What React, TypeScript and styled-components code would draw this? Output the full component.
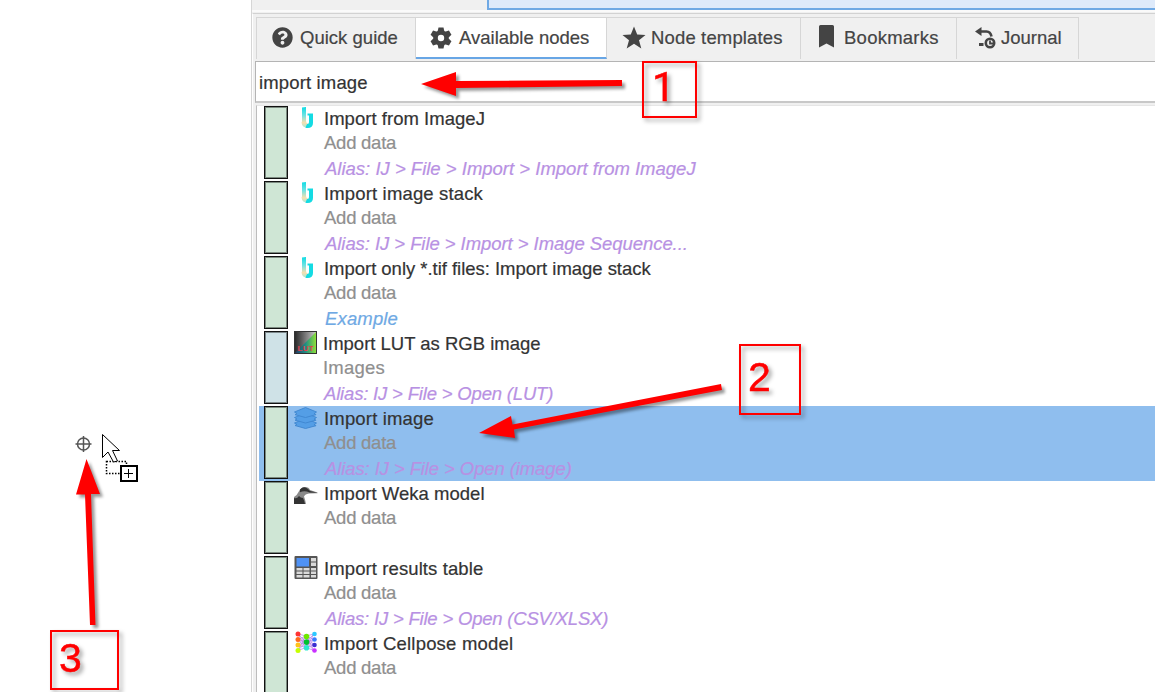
import React from "react";
import styled, { createGlobalStyle } from "styled-components";
import { FaQuestionCircle } from "react-icons/fa";

const GlobalStyle = createGlobalStyle`
  * { box-sizing: border-box; }
  body { margin: 0; background: #fff; overflow: hidden; font-family: "Liberation Sans", Arial, sans-serif; }
`;

const Window = styled.div`
  position: relative;
  display: flex;
  width: 1155px;
  height: 692px;
  overflow: hidden;
  background: #fff;
`;
const Canvas = styled.div`
  width: 251px;
  flex: none;
`;
const Side = styled.div`
  flex: 1;
  min-width: 0;
  display: flex;
  flex-direction: column;
  border-left: 1px solid #d6d6d6;
  background: #f0f0f0;
`;
const TopStrip = styled.div`
  height: 12px;
  flex: none;
  display: flex;
  padding-left: 235px;
  border-bottom: 2px solid #fafafa;
`;
const TopField = styled.div`
  flex: 1;
  height: 10px;
  background: #deeafa;
  border-left: 2px solid #6fa9e4;
  border-bottom: 2px solid #6fa9e4;
`;
const Dock = styled.div`
  flex: 1;
  display: flex;
  flex-direction: column;
  margin-top: 1px;
  border-top: 1px solid #d2d2d2;
  border-left: 1px solid #fff;
  padding: 3px 0 0 2px;
`;
const Tabs = styled.div`
  display: flex;
  height: 42px;
  flex: none;
  margin-left: 1px;
  border-top: 1px solid #d6d6d6;
  border-left: 1px solid #d6d6d6;
  width: 823px;
`;
const Tab = styled.div<{ $w: number; $active?: boolean; $pad: number; $gap: number }>`
  display: flex;
  align-items: center;
  gap: ${(p) => p.$gap}px;
  width: ${(p) => p.$w}px;
  padding: 0 0 ${(p) => (p.$active ? 0 : 2)}px ${(p) => p.$pad}px;
  height: 41px;
  border-right: 1px solid #d6d6d6;
  border-bottom: ${(p) => (p.$active ? "2px solid #68a6e5" : "0")};
  background: ${(p) => (p.$active ? "#fff" : "#f0f0f0")};
  color: #444;
  svg { flex: none; }
`;
const Label = styled.span<{ $ls?: number }>`
  font-size: 18.5px;
  line-height: 24px;
  white-space: nowrap;
  letter-spacing: ${(p) => p.$ls ?? 0}px;
  -webkit-text-stroke: 0.2px currentColor;
`;
const Search = styled.div`
  height: 42px;
  flex: none;
  display: flex;
  align-items: center;
  margin-top: 2px;
  padding: 2px 0 0 3px;
  border: 1px solid #b4b4b4;
  border-bottom: 2px solid #c8c8c8;
  border-right: 0;
  background: #fff;
  color: #333;
`;
const List = styled.div`
  flex: 1;
  margin: 2px 0 0 1px;
  border-left: 1px solid #bdbdbd;
  border-top: 1px solid #e6e6e6;
  background: #fff;
  padding-left: 2px;
`;
const Row = styled.div<{ $selected?: boolean }>`
  display: flex;
  height: 75px;
  padding-left: 5px;
  background: ${(p) => (p.$selected ? "#8fbeee" : "transparent")};
`;
const Bar = styled.div<{ $color: string }>`
  width: 24px;
  height: 73px;
  border: 1.5px solid #111;
  outline: 1px solid rgba(0, 0, 0, 0.4);
  outline-offset: -2px;
  background: ${(p) => p.$color};
`;
const IconCell = styled.div<{ $w: number }>`
  width: ${(p) => p.$w}px;
  padding-left: 6px;
  svg { display: block; }
`;
const Lines = styled.div`
  display: flex;
  flex-direction: column;
`;
const Line = styled.div<{ $kind: Kind; $ls?: number }>`
  height: 25px;
  line-height: ${(p) => ({ title: 25, sub: 24, alias: 25, example: 25 })[p.$kind]}px;
  font-size: 18.5px;
  white-space: nowrap;
  letter-spacing: ${(p) => p.$ls ?? 0}px;
  -webkit-text-stroke: 0.2px currentColor;
  padding-left: ${(p) => (p.$kind === "alias" || p.$kind === "example" ? 1 : 0)}px;
  font-style: ${(p) => (p.$kind === "alias" || p.$kind === "example" ? "italic" : "normal")};
  color: ${(p) => ({ title: "#333", sub: "#8f8f8f", alias: "#b891e3", example: "#6fa9e4" })[p.$kind]};
`;
const Overlay = styled.svg`
  position: absolute;
  left: 0;
  top: 0;
`;
const Callout = styled.div<{ $x: number; $y: number; $w: number; $h: number; $px: number; $py: number; $font?: string }>`
  position: absolute;
  left: ${(p) => p.$x}px;
  top: ${(p) => p.$y}px;
  width: ${(p) => p.$w}px;
  height: ${(p) => p.$h}px;
  padding: ${(p) => p.$py}px 0 0 ${(p) => p.$px}px;
  border: 2px solid #f00;
  color: #f00;
  font-family: ${(p) => p.$font ?? '"Liberation Sans"'}, sans-serif;
  font-size: 41px;
  line-height: 42px;
  -webkit-text-stroke: 0.5px #f00;
  filter: drop-shadow(3px 3px 2px rgba(0, 0, 0, 0.35));
`;

type Kind = "title" | "sub" | "alias" | "example";
type IconName = "bolt" | "lut" | "layers" | "bird" | "table" | "net";

const netLeft = ["#f33", "#ff6a1a", "#ffc21a", "#c6ff00"];
const netRight = ["#2cc8ff", "#3b7bff", "#3a2fd0", "#c931ff"];
const netMid = ["#6fe800", "#00c030", "#2fe8d0"];

function NodeIcon({ name }: { name: IconName }) {
  switch (name) {
    case "bolt":
      return (
        <svg width="23" height="24" viewBox="0 0 23 24">
          <defs>
            <linearGradient id="ij" x1="0" y1="0" x2="0" y2="1">
              <stop offset="0" stopColor="#10dce4" />
              <stop offset="0.4" stopColor="#6fe3e2" />
              <stop offset="0.75" stopColor="#f6e0b0" />
              <stop offset="1" stopColor="#9fe8dc" />
            </linearGradient>
          </defs>
          <path d="M8 1.500l4-.5v13.500q0 3 3 3.500l-1 4q-6-.5-6.500-5.500l.5-1z" fill="url(#ij)" />
          <path d="M13.500 7.500h5.500v9.500q0 5-5.500 5-1.500 0-2-.5l1.500-3.500q2 .5 2-2V9.500h-1.500z" fill="#14dbe3" />
        </svg>
      );
    case "lut":
      return (
        <svg width="23" height="23" viewBox="0 0 23 23">
          <defs>
            <linearGradient id="gray"><stop offset="0" stopColor="#2a2a2a" /><stop offset="1" stopColor="#c8c8c8" /></linearGradient>
            <linearGradient id="hue"><stop offset="0" stopColor="#233a6b" /><stop offset="0.5" stopColor="#1f8d83" /><stop offset="1" stopColor="#8ee03a" /></linearGradient>
          </defs>
          <rect width="23" height="23" fill="#333" />
          <rect x="1" y="1" width="21" height="21" fill="url(#gray)" />
          <path d="M22 1v21H1z" fill="url(#hue)" />
          <text x="3.500" y="19.500" fontSize="8" fontWeight="bold" letterSpacing="0.3" fill="#e0404e" fontFamily="Liberation Sans">LUT</text>
        </svg>
      );
    case "layers":
      return (
        <svg width="23" height="24" viewBox="0 0 23 24" fill="#549ee6" stroke="#3e86cf" strokeWidth="0.9">
          <path d="M11.500 12.500L22.500 17 20 18.700q2 .5 2 1L11.500 22.500 1 19.500 3 18.500.5 17z" />
          <path d="M11.500 7L22.500 11.500 20 13.200q2 .5 2 1L11.500 17 1 14.200 3 13 .5 11.500z" />
          <path d="M11.500 1.500L22.500 6 20 7.700q2 .5 2 1L11.500 11.500 1 8.700 3 7.500.5 6z" />
        </svg>
      );
    case "bird":
      return (
        <svg width="24" height="24" viewBox="0 0 24 24">
          <path d="M0 23V16q3-1.500 4.500-5Q7 6 11 6q4 0 5 3l7.500 2.500v.8L15 12.500q-4 .5-5 3 1.500 4 2 7.500z" fill="#8a8a8a" />
          <path d="M0 23v-6q3 1 5-2 1.500 2 4 2 1.500 3 2 6zM6 8.500q4-4 8-.5l2 2 7.500 1.700-8-.2q-5-2.500-9.500-.3z" fill="#333" />
        </svg>
      );
    case "table":
      return (
        <svg width="24" height="24" viewBox="0 0 24 24">
          <rect x="0.500" y="0" width="23" height="23" rx="1" fill="#555" />
          <rect x="2.500" y="2" width="12.500" height="8.500" fill="#4f92f5" />
          <g fill="#dadada">
            {[2, 6.500].map((y) => <rect key={y} x="17" y={y} width="5" height="3.500" />)}
            {[12, 15.500, 19].map((y) => [2.500, 9.500, 17].map((x) => <rect key={`${x}-${y}`} x={x} y={y} width={x === 17 ? 5 : 6} height="2.500" />))}
          </g>
        </svg>
      );
    case "net":
      return (
        <svg width="23" height="24" viewBox="0 0 23 24">
          <g stroke="#b478e6" strokeWidth="0.7">
            {[3, 8.500, 14, 19.500].flatMap((a) => [5, 11, 16.500].flatMap((b) => [
              <line key={`l${a}-${b}`} x1="4" y1={a} x2="12" y2={b} />,
              <line key={`r${a}-${b}`} x1="20" y1={a} x2="12" y2={b} />,
            ]))}
          </g>
          {netLeft.map((c, i) => <circle key={c} cx="4" cy={3 + i * 5.500} r="2.500" fill={c} />)}
          {netRight.map((c, i) => <circle key={c} cx="20.500" cy={3 + i * 5.500} r="2.300" fill={c} />)}
          {netMid.map((c, i) => <circle key={c} cx="12.500" cy={5.500 + i * 5.600} r="2.800" fill={c} />)}
        </svg>
      );
  }
}

interface Node {
  icon: IconName;
  title: string;
  sub: string;
  note?: string;
  example?: boolean;
  selected?: boolean;
  blue?: boolean;
  /** letter spacing of the title and of the note */
  ls: [number, number];
}
const nodes: Node[] = [
  { icon: "bolt", title: "Import from ImageJ", sub: "Add data", note: "Alias: IJ > File > Import > Import from ImageJ", ls: [0.03, 0] },
  { icon: "bolt", title: "Import image stack", sub: "Add data", note: "Alias: IJ > File > Import > Image Sequence...", ls: [0.15, -0.06] },
  { icon: "bolt", title: "Import only *.tif files: Import image stack", sub: "Add data", note: "Example", example: true, ls: [-0.03, 0.15] },
  { icon: "lut", title: "Import LUT as RGB image", sub: "Images", note: "Alias: IJ > File > Open (LUT)", blue: true, ls: [0, -0.18] },
  { icon: "layers", title: "Import image", sub: "Add data", note: "Alias: IJ > File > Open (image)", selected: true, ls: [0.17, -0.1] },
  { icon: "bird", title: "Import Weka model", sub: "Add data", ls: [0.03, 0] },
  { icon: "table", title: "Import results table", sub: "Add data", note: "Alias: IJ > File > Open (CSV/XLSX)", ls: [0.1, -0.2] },
  { icon: "net", title: "Import Cellpose model", sub: "Add data", ls: [0.2, 0] },
];

const GearIcon = () => (
  <svg width="22" height="22" viewBox="-11 -11 22 22">
    <circle r="5.500" fill="none" stroke="#444" strokeWidth="4.600" />
    {[0, 60, 120, 180, 240, 300].map((a) => (
      <path key={a} d="M-3.400-6.500L-2.500-10.600h5L3.400-6.500z" fill="#444" transform={`rotate(${a})`} />
    ))}
  </svg>
);
const StarIcon = () => (
  <svg width="24" height="24" viewBox="0 0 24 24" fill="#444">
    <path d="M12 .5l3.200 8 8.300.4-6.500 5.300 2.300 8.300L12 17.800l-7.300 4.700L7 14.200.5 8.900l8.300-.4z" />
  </svg>
);
const BookmarkIcon = () => (
  <svg width="15" height="26" viewBox="0 0 15 26" fill="#444">
    <path d="M0 1.500Q0 0 1.500 0h12Q15 0 15 1.500V22.500l-7.500-4L0 22.500z" />
  </svg>
);
const JournalIcon = () => (
  <svg width="22" height="22" viewBox="0 0 22 22" fill="none" stroke="#444">
    <path d="M5 4.500h6.500q4 0 5 5" strokeWidth="2.600" />
    <path d="M0 4.500l6.500-4.500v9z" fill="#444" stroke="none" />
    <path d="M4 17.500h4.500" strokeWidth="3" />
    <circle cx="15" cy="16" r="4.200" strokeWidth="2.600" />
    <path d="M15 13.500v3h3.500" strokeWidth="1.800" />
  </svg>
);

export default function App() {
  return (
    <Window>
      <GlobalStyle />
      <Canvas />
      <Side>
        <TopStrip><TopField /></TopStrip>
        <Dock>
          <Tabs>
            <Tab $w={159} $pad={15} $gap={7}><FaQuestionCircle size={21} /><Label $ls={0.02}>Quick guide</Label></Tab>
            <Tab $w={191} $pad={14} $gap={7} $active><GearIcon /><Label>Available nodes</Label></Tab>
            <Tab $w={194} $pad={15} $gap={5}><StarIcon /><Label $ls={0.15}>Node templates</Label></Tab>
            <Tab $w={156} $pad={18} $gap={10}><BookmarkIcon /><Label $ls={0.25}>Bookmarks</Label></Tab>
            <Tab $w={122} $pad={18} $gap={4}><JournalIcon /><Label>Journal</Label></Tab>
          </Tabs>
          <Search><Label $ls={0.15}>import image</Label></Search>
          <List>
            {nodes.map((n) => (
              <Row key={n.title} $selected={n.selected}>
                <Bar $color={n.blue ? "#cfe2e7" : "#cfe6d5"} />
                <IconCell $w={n.blue ? 35 : 36}><NodeIcon name={n.icon} /></IconCell>
                <Lines>
                  <Line $kind="title" $ls={n.ls[0]}>{n.title}</Line>
                  <Line $kind="sub" $ls={n.blue ? 0.2 : -0.25}>{n.sub}</Line>
                  {n.note && <Line $kind={n.example ? "example" : "alias"} $ls={n.ls[1]}>{n.note}</Line>}
                </Lines>
              </Row>
            ))}
          </List>
        </Dock>
      </Side>
      <Overlay width="1155" height="692" viewBox="0 0 1155 692">
        <g fill="#f00" style={{ filter: "drop-shadow(3px 3px 1.5px rgba(0,0,0,.4))" }}>
          <path d="M421 84L456 72V81L622 80V86L456 88V96z" />
          <path d="M479 433L511 416 512.500 424.500 721 384 722 390 514 429.500 515 438z" />
          <path d="M86.500 459L100 494H91L95.500 625H90L85 494.500H76z" />
        </g>
        <g fill="none" stroke="#555" strokeWidth="1.500">
          <circle cx="83.500" cy="444" r="6" />
          <path d="M75.500 444h16M83.500 436v16" />
        </g>
        <rect x="106.500" y="461.500" width="20" height="12" fill="none" stroke="#000" strokeWidth="1.500" strokeDasharray="1.500 1.500" />
        <path d="M102.500 434.500v23l5.500-5.500 5.500 10 4-1-5-10.500h7z" fill="#fff" stroke="#000" />
        <rect x="121" y="466" width="16" height="15" fill="#fff" stroke="#000" strokeWidth="2" />
        <path d="M124 473.500h9M128.500 469v9" stroke="#000" />
      </Overlay>
      <Callout $x={642} $y={61} $w={55} $h={57} $px={8} $py={3} $font="Roboto">1</Callout>
      <Callout $x={739} $y={344} $w={62} $h={71} $px={7} $py={10}>2</Callout>
      <Callout $x={50} $y={630} $w={69} $h={60} $px={7} $py={5}>3</Callout>
    </Window>
  );
}
